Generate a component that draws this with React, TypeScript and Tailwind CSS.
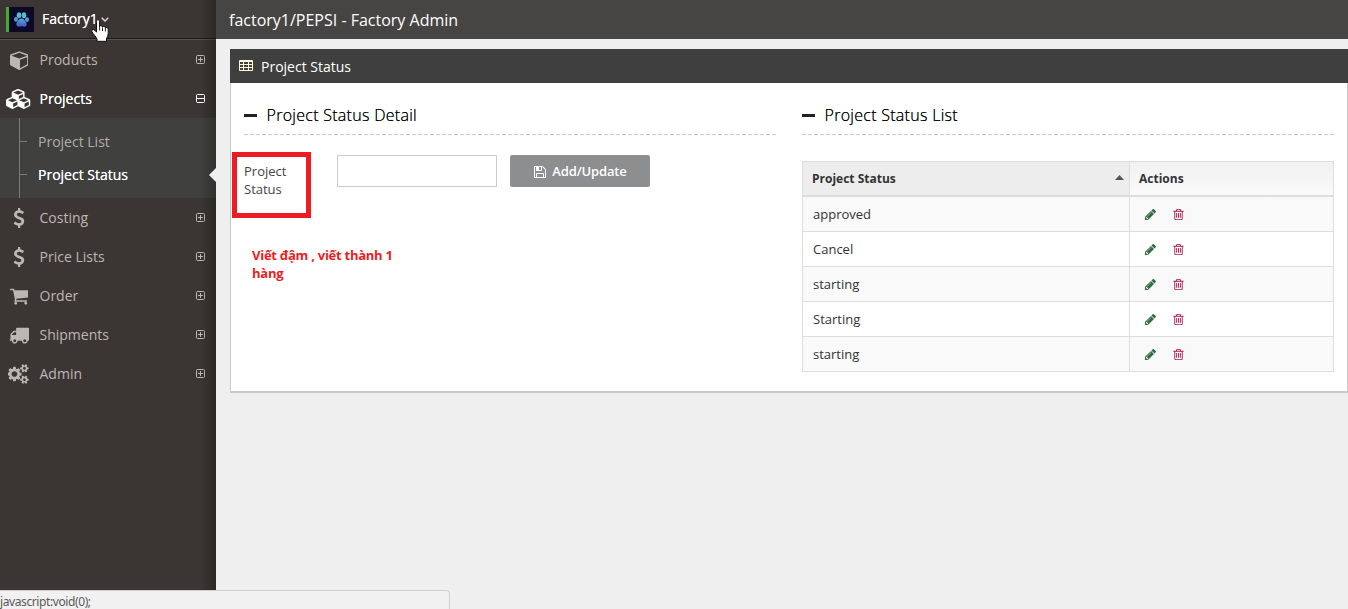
import React from "react";

const CUBE =
  "M896 1629l640-349v-636l-640 233v752zm-64-865l698-254-698-254-698 254zm832-252v768q0 35-18 65t-49 47l-704 384q-28 16-61 16t-61-16l-704-384q-31-17-49-47t-18-65v-768q0-40 23-73t61-50l704-256q22-8 44-8t44 8l704 256q38 17 61 50t23 73z";
const CUBES =
  "M640 1632l384-192v-314l-384 164v342zm-64-454l404-173-404-173-404 173zm1088 454l384-192v-314l-384 164v342zm-64-454l404-173-404-173-404 173zm-448-293l384-165v-266l-384 164v267zm-64-379l441-189-441-189-441 189zm1088 518v416q0 36-19 67t-52 47l-448 224q-25 14-57 14t-57-14l-448-224q-4-2-7-4-2 2-7 4l-448 224q-25 14-57 14t-57-14l-448-224q-33-16-52-47t-19-67v-416q0-38 21.5-70t56.5-48l434-186v-400q0-38 21.5-70t56.5-48l448-192q23-10 50-10t50 10l448 192q35 16 56.5 48t21.5 70v400l434 186q36 16 57 48t21 70z";
const DOLLAR =
  "M1362 1185q0 153-99.5 263.5t-258.5 136.5v175q0 14-9 23t-23 9h-135q-13 0-22.5-9.5t-9.5-22.5v-175q-66-9-127.5-31t-101.5-44.5-74-48-46.5-37.5-17.5-18q-17-21-2-41l103-135q7-10 23-12 15-2 24 9l2 2q113 99 243 125 37 8 74 8 81 0 142.5-43t61.5-122q0-28-15-53t-33.5-42-58.5-37.5-66-32-80-32.5q-39-16-61.5-25t-61.5-26.5-62.5-31-56.5-35.5-53.5-42.5-43.5-49-35.5-58-21-66.5-8.5-78q0-138 98-242t255-134v-180q0-13 9.5-22.5t22.5-9.5h135q14 0 23 9t9 23v176q57 6 110.5 23t87 33.5 63.5 37.5 39 29 15 14q17 18 5 38l-81 146q-8 15-23 16-14 3-27-7-3-3-14.5-12t-39-26.5-58.5-32-74.5-26-85.5-11.5q-95 0-155 43t-60 111q0 26 8.5 48t29.5 41.5 39.5 33 56 31 60.5 27 70 27.5q53 20 81 31.5t76 35 75.5 42.5 62 50 53 63.5 31.5 76.5 13 94z";
const CART =
  "M640 1536q0 52-38 90t-90 38-90-38-38-90 38-90 90-38 90 38 38 90zm896 0q0 52-38 90t-90 38-90-38-38-90 38-90 90-38 90 38 38 90zm128-1088v512q0 24-16.5 42.5t-40.5 21.5l-1044 122q13 60 13 70 0 16-24 64h920q26 0 45 19t19 45-19 45-45 19h-1024q-26 0-45-19t-19-45q0-11 8-31.5t16-36 21.5-40 15.5-29.5l-177-823h-204q-26 0-45-19t-19-45 19-45 45-19h256q16 0 28.5 6.5t19.5 15.5 13 24.5 8 26 5.5 29.5 4.5 26h1201q26 0 45 19t19 45z";
const TRUCK =
  "M640 1408q0-52-38-90t-90-38-90 38-38 90 38 90 90 38 90-38 38-90zm-384-512h384v-256h-158q-13 0-22 9l-195 195q-9 9-9 22v30zm1280 512q0-52-38-90t-90-38-90 38-38 90 38 90 90 38 90-38 38-90zm256-1088v1024q0 15-4 26.5t-13.5 18.5-16.5 11.5-23.5 6-22.5 2-25.5 0-22.5-.5q0 106-75 181t-181 75-181-75-75-181h-384q0 106-75 181t-181 75-181-75-75-181h-64q-3 0-22.5.5t-25.5 0-22.5-2-23.5-6-16.5-11.5-13.5-18.5-4-26.5q0-26 19-45t45-19v-320q0-8-.5-35t0-38 2.5-34.5 6.5-37 14-30.5 22.5-30l198-198q19-19 50.5-32t58.5-13h160v-192q0-26 19-45t45-19h1024q26 0 45 19t19 45z";
const SMALL_COG =
  "v140q0 16-149 31-12 27-30 52 51 113 51 138 0 4-4 7-122 71-124 71-8 0-46-47t-52-68q-20 2-30 2t-30-2q-14 21-52 68t-46 47q-2 0-124-71-4-3-4-7 0-25 51-138-18-25-30-52-149-15-149-31v-140q0-16 149-31 13-29 30-52-51-113-51-138 0-4 4-7 4-2 35-20t59-34 30-16q8 0 46 46.5t52 67.5q20-2 30-2t30 2q51-71 92-112l6-2q4 0 124 70 4 3 4 7 0 25-51 138 17 23 30 52 149 15 149 31z";
const COGS =
  "M832 896q0-106-75-181t-181-75-181 75-75 181 75 181 181 75 181-75 75-181zm768 512q0-52-38-90t-90-38-90 38-38 90q0 53 37.5 90.5t90.5 37.5 90.5-37.5 37.5-90.5zm0-1024q0-52-38-90t-90-38-90 38-38 90q0 53 37.5 90.5t90.5 37.5 90.5-37.5 37.5-90.5zm-384 421v185q0 10-7 19.5t-16 10.5l-155 24q-11 35-32 76 34 48 90 115 7 11 7 20 0 12-7 19-23 30-82.5 89.5t-78.5 59.5q-11 0-21-7l-115-90q-37 19-77 31-11 108-23 155-7 24-30 24h-186q-11 0-20-7.5t-10-17.5l-23-153q-34-10-75-31l-118 89q-7 7-20 7-11 0-21-8-144-133-144-160 0-9 7-19 10-14 41-53t47-61q-23-44-35-82l-152-24q-10-1-17-9.5t-7-19.5v-185q0-10 7-19.5t16-10.5l155-24q11-35 32-76-34-48-90-115-7-11-7-20 0-12 7-20 22-30 82-89t79-59q11 0 21 7l115 90q34-18 77-32 11-108 23-154 7-24 30-24h186q11 0 20 7.5t10 17.5l23 153q34 10 75 31l118-89q8-7 20-7 11 0 21 8 144 133 144 160 0 8-7 19-12 16-42 54t-45 60q23 48 34 82l152 23q10 2 17 10.5t7 19.5z" +
  "M1856 1338" + SMALL_COG + "M1856 314" + SMALL_COG;
const FLOPPY =
  "M512 1536h768v-384h-768v384zm896 0h128v-896q0-14-10-38.5t-20-34.5l-281-281q-10-10-34-20t-39-10v416q0 40-28 68t-68 28h-576q-40 0-68-28t-28-68v-416h-128v1280h128v-416q0-40 28-68t68-28h832q40 0 68 28t28 68v416zm-384-928v-320q0-13-9.5-22.5t-22.5-9.5h-192q-13 0-22.5 9.5t-9.5 22.5v320q0 13 9.5 22.5t22.5 9.5h192q13 0 22.5-9.5t9.5-22.5zm640 32v928q0 40-28 68t-68 28h-1344q-40 0-68-28t-28-68v-1344q0-40 28-68t68-28h928q40 0 88 20t76 48l280 280q28 28 48 76t20 88z";
const PENCIL =
  "M491 1536l91-91-235-235-91 91v107h128v128h107zm523-928q0-22-22-22-10 0-17 7l-542 542q-7 7-7 17 0 22 22 22 10 0 17-7l542-542q7-7 7-17zm-54-192l416 416-832 832h-416v-416zm683 96q0 53-37 90l-166 166-416-416 166-165q36-38 90-38 53 0 91 38l235 234q37 39 37 91z";
const TRASH =
  "M704 736v576q0 14-9 23t-23 9h-64q-14 0-23-9t-9-23v-576q0-14 9-23t23-9h64q14 0 23 9t9 23zm256 0v576q0 14-9 23t-23 9h-64q-14 0-23-9t-9-23v-576q0-14 9-23t23-9h64q14 0 23 9t9 23zm256 0v576q0 14-9 23t-23 9h-64q-14 0-23-9t-9-23v-576q0-14 9-23t23-9h64q14 0 23 9t9 23zm128 724v-948h-896v948q0 22 7 40.5t14.5 27 10.5 8.5h832q3 0 10.5-8.5t14.5-27 7-40.5zm-672-1076h448l-48-117q-7-9-17-11h-317q-10 2-17 11zm928 32v64q0 14-9 23t-23 9h-96v948q0 83-47 143.5t-113 60.5h-832q-66 0-113-58.5t-47-141.5v-952h-96q-14 0-23-9t-9-23v-64q0-14 9-23t23-9h309l70-167q15-37 54-63t79-26h320q40 0 79 26t54 63l70 167h309q14 0 23 9t9 23z";

function Glyph({ d, w = 1792, className }: { d: string; w?: number; className: string }) {
  return (
    <svg viewBox={`0 0 ${w} 1792`} fill="currentColor" className={`shrink-0 ${className}`} aria-hidden>
      <path d={d} />
    </svg>
  );
}

function Toggle({ open }: { open?: boolean }) {
  return (
    <svg viewBox="0 0 9 9" className="mb-px h-[9px] w-[9px] shrink-0" fill="none" stroke="currentColor" aria-hidden>
      <rect x="0.5" y="0.5" width="8" height="8" rx="1" />
      <path d={open ? "M1 4.500H8" : "M2 4.500H7M4.500 2V7"} />
    </svg>
  );
}

type Item = { label: string; d: string; w?: number; size: string };

const products: Item = { label: "Products", d: CUBE, w: 1664, size: "h-5 w-[18.6px]" };
const projects: Item = { label: "Projects", d: CUBES, w: 2304, size: "h-5 w-[25.7px]" };
const others: Item[] = [
  { label: "Costing", d: DOLLAR, size: "h-5 w-5" },
  { label: "Price Lists", d: DOLLAR, size: "h-5 w-5" },
  { label: "Order", d: CART, w: 1664, size: "h-5 w-[18.6px]" },
  { label: "Shipments", d: TRUCK, size: "h-5 w-5" },
  { label: "Admin", d: COGS, w: 1920, size: "h-5 w-[21.4px]" },
];

function NavItem({ item, active }: { item: Item; active?: boolean }) {
  return (
    <div
      className={`flex h-[39px] items-center pr-[11px] text-[14px] ${
        active ? "text-white [text-shadow:0_0_0.6px_#fff]" : "text-[#bdb7b3]"
      }`}
    >
      <span className="flex w-[38px] shrink-0 justify-center">
        <Glyph d={item.d} w={item.w} className={item.size} />
      </span>
      <span className="flex-1 pl-[1.5px]">{item.label}</span>
      <Toggle open={active} />
    </div>
  );
}

function Heading({ children }: { children: React.ReactNode }) {
  return (
    <div className="flex h-[38px] w-full items-center">
      <span className="h-[3px] w-[13px] bg-[#222]" />
      <h2 className="pl-[9.5px] text-[16px] font-light tracking-[0.28px] text-black [text-shadow:0_0_0.5px_#333]">
        {children}
      </h2>
    </div>
  );
}

function Dashes() {
  return (
    <div className="h-px w-full bg-[repeating-linear-gradient(90deg,#c9c9c9_0_4px,transparent_4px_6px)]" />
  );
}

const rows = ["approved", "Cancel", "starting", "Starting", "starting"];

export default function App() {
  return (
    <div className="relative flex h-[609px] w-[1348px] overflow-hidden bg-[#efefef] font-['Open_Sans',sans-serif]">
      <aside className="relative w-[216px] shrink-0 bg-[#3b3633]">
        <div className="flex h-10 items-start border-b border-[#575350] shadow-[inset_0_-1px_0_#1c1a19]">
          <div className="ml-[6px] mt-[7px] flex h-[25px] w-7 border-l-[3px] border-[#3fae2a] bg-[#0d0826]">
            <svg viewBox="0 0 25 25" className="h-[25px] w-[25px]" aria-hidden>
              <defs>
                <linearGradient id="paw" x1="0" y1="0" x2="0" y2="1">
                  <stop offset="0" stopColor="#5aa8d8" />
                  <stop offset="1" stopColor="#4058c8" />
                </linearGradient>
              </defs>
              <ellipse cx="10" cy="8.200" rx="2.300" ry="3" fill="#5cb6cf" />
              <ellipse cx="15" cy="8.200" rx="2.300" ry="3" fill="#5cb6cf" />
              <ellipse cx="7" cy="12.300" rx="2" ry="2.500" fill="#4f98cc" />
              <ellipse cx="18" cy="12.500" rx="2" ry="2.500" fill="#4f98cc" />
              <path
                d="M12.500 11.500c2.200 0 3 1.800 4.200 3.200 1.500 1.800 1 5-1.400 5-1.100 0-1.700-.4-2.800-.4s-1.700.4-2.800.4c-2.400 0-2.900-3.200-1.400-5 1.200-1.400 2-3.200 4.200-3.200z"
                fill="url(#paw)"
              />
            </svg>
          </div>
          <span className="pl-2 text-[14px] leading-[38px] text-white [text-shadow:0_0_0.6px_#fff]">Factory1</span>
          <svg viewBox="0 0 8 5" className="ml-[3px] mt-[17px] h-[5px] w-2" fill="none" stroke="#ddd" strokeWidth="1.4" aria-hidden>
            <path d="M.7.700 4 3.900 7.300.7" />
          </svg>
        </div>
        <nav>
          <NavItem item={products} />
          <NavItem item={projects} active />
          <div className="flex h-20 bg-[#40403f] pl-[19px]">
            <div className="w-px bg-[#7d7b79]" />
            <div className="flex flex-1 flex-col pt-[7px] text-[14px]">
              <div className="flex h-[33px] items-center text-[#b3aeaa]">
                <span className="mr-[11px] h-px w-[7px] bg-[#7d7b79]" />
                Project List
              </div>
              <div className="flex h-[33px] items-center text-white [text-shadow:0_0_0.6px_#fff]">
                <span className="mr-[11px] h-px w-[7px] bg-[#7d7b79]" />
                Project Status
              </div>
            </div>
          </div>
          {others.map((it) => (
            <NavItem key={it.label} item={it} />
          ))}
        </nav>
        <div className="absolute inset-y-0 right-0 w-4 bg-gradient-to-r from-transparent to-black/25" />
        <svg viewBox="0 0 7 14" className="absolute right-0 top-[168px] h-[14px] w-[7px]" aria-hidden>
          <path d="M7 0V14L0 7z" fill="#efefef" />
        </svg>
      </aside>

      <div className="flex min-w-0 flex-1 flex-col">
        <header className="flex h-[39px] items-center bg-[#474543] pl-[13px] text-[16px] text-white">
          factory1/PEPSI - Factory Admin
        </header>
        <section className="ml-[14px] mt-[10px] flex h-[344px] flex-col">
          <div className="flex h-[34px] shrink-0 items-center bg-[#3f3f3f] pl-[9px] text-[14px] text-white">
            <svg viewBox="0 0 14 11" className="mb-[2px] mr-2 h-[11px] w-[14px]" aria-hidden>
              <path
                fillRule="evenodd"
                fill="#fff8d8"
                d="M1 0H13Q14 0 14 1V10Q14 11 13 11H1Q0 11 0 10V1Q0 0 1 0ZM1 2V4H4V2ZM5 2V4H9V2ZM10 2V4H13V2ZM1 5V7H4V5ZM5 5V7H9V5ZM10 5V7H13V5ZM1 8V10H4V8ZM5 8V10H9V8ZM10 8V10H13V8Z"
              />
            </svg>
            Project Status
          </div>
          <div className="flex flex-1 border border-b-2 border-t-0 border-[#c9c9c9] bg-white pl-[13px] pr-[13px] pt-[13px]">
            <div className="w-[532px]">
              <Heading>Project Status Detail</Heading>
              <Dashes />
              <div className="flex h-[52px] pt-[20px]">
                <label className="w-[93px] pr-5 pt-[7px] text-[13px] leading-[18px] text-[#444]">Project Status</label>
                <input className="h-8 w-40 border border-[#ccc] bg-white outline-none" />
                <button className="ml-[13px] flex h-8 w-[140px] items-center justify-center gap-[5px] rounded-[2px] bg-[#8d8e90] text-[13px] font-semibold tracking-[-0.15px] text-white">
                  <Glyph d={FLOPPY} className="mt-px h-[14px] w-[14px]" />
                  <span className="pt-px">Add/Update</span>
                </button>
              </div>
              <p className="ml-2 mt-[59px] w-[150px] text-[13px] font-bold leading-[18px] tracking-[-0.26px] text-[#ed1c24]">
                Viết đậm , viết thành 1 hàng
              </p>
            </div>
            <div className="ml-[26px] w-[532px]">
              <Heading>Project Status List</Heading>
              <Dashes />
              <div className="mt-[26px] border border-b-0 border-[#ddd] text-[13px] text-[#333]">
                <div className="flex h-[35px] border-b-2 border-[#ddd] text-[12px] font-bold">
                  <div className="flex w-[327px] items-center justify-between border-r border-[#ddd] bg-[#ededed] pl-[9px] pr-[5px]">
                    Project Status
                    <svg viewBox="0 0 9 5" className="mb-[2px] h-[5px] w-[9px]" aria-hidden>
                      <path d="M0 5 4.500 0 9 5z" fill="#555" />
                    </svg>
                  </div>
                  <div className="flex flex-1 items-center bg-gradient-to-b from-[#f1f1f1] to-[#fafafa] pl-[9px]">Actions</div>
                </div>
                {rows.map((r, i) => (
                  <div
                    key={i}
                    className={`flex h-[35px] border-b border-[#ddd] ${i % 2 === 0 ? "bg-[#f9f9f9]" : "bg-white"}`}
                  >
                    <div className="flex w-[327px] items-center border-r border-[#ddd] pl-[10px] pt-[2px]">{r}</div>
                    <div className="flex flex-1 items-center gap-[15px] pl-[14px] pt-px">
                      <Glyph d={PENCIL} className="h-[13px] w-[13px] text-[#2e6b3e]" />
                      <Glyph d={TRASH} className="h-[13px] w-[13px] text-[#a8194e]" />
                    </div>
                  </div>
                ))}
              </div>
            </div>
          </div>
        </section>
      </div>

      <div className="absolute left-[232px] top-[152px] h-[66px] w-[79px] border-[5px] border-[#ed1c24]" />
      <div className="absolute bottom-0 left-0 flex h-[19px] w-[450px] items-center rounded-tr-[4px] border-r border-t border-[#cfcfcf] bg-[#f1f1f1] pt-[3px] font-['Noto_Sans',sans-serif] text-[12px] tracking-[-0.4px] text-[#5a5a5a]">
        javascript:void(0);
      </div>
      <svg viewBox="0 0 18 23" className="absolute left-[91px] top-[19px] h-[23px] w-[18px]" aria-hidden>
        <path
          d="M5.500 2.500C5.500.2 8.500.2 8.500 2.500V7.500C9 6.200 11.300 6.500 11.500 8 12.200 7 14.200 7.300 14.400 8.800 15.200 8 17.200 8.500 17.200 10.500V14.500C17.200 17 15.800 18 15.500 20V22.300H6V20C5 17.500 2.500 15.500 1 12.800 0 11 2.500 9.800 4 11.500L5.500 13.200Z"
          fill="#fff"
          stroke="#111"
          strokeWidth="1"
          strokeLinejoin="round"
        />
        <path d="M8.600 7.500V11.500M11.500 8.500V12M14.400 9V12.500" stroke="#111" strokeWidth=".9" />
      </svg>
    </div>
  );
}
